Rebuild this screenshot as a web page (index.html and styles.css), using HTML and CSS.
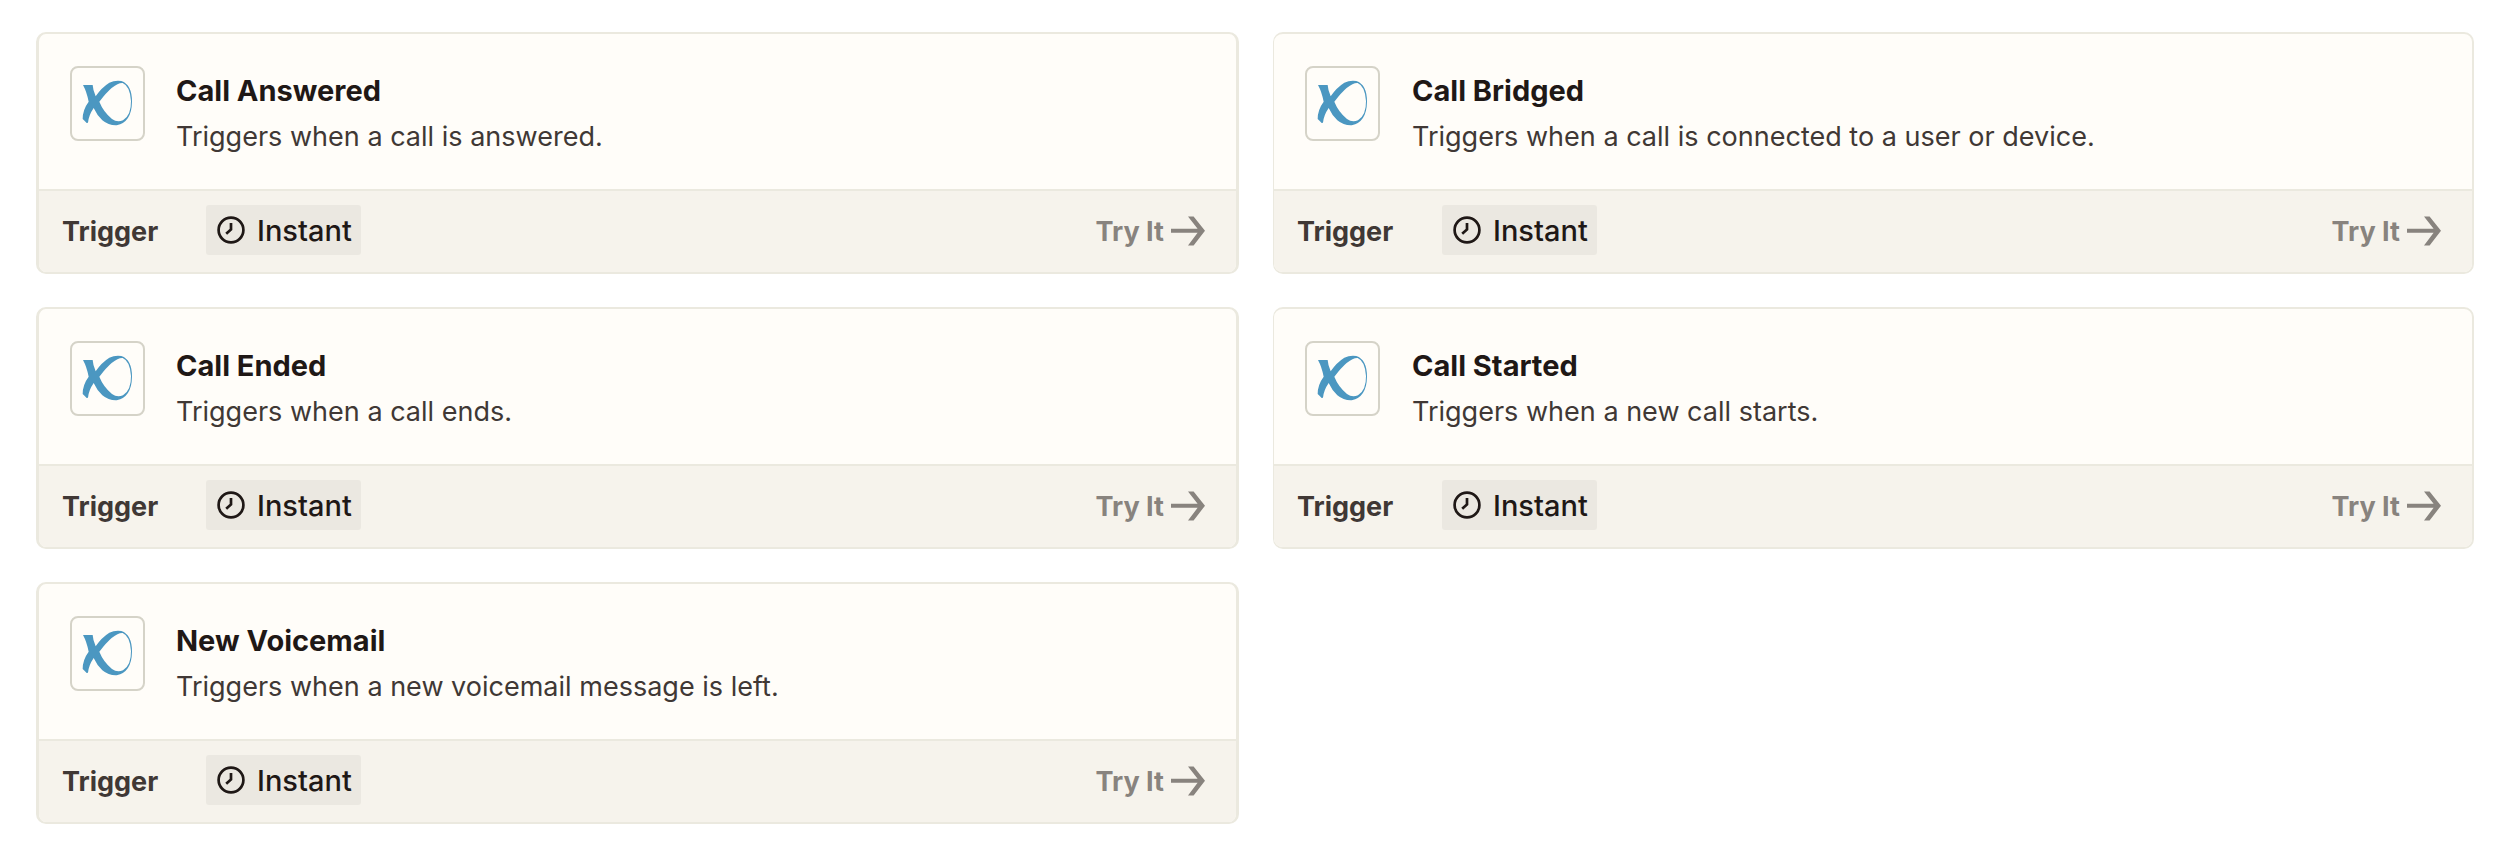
FILE: index.html
```
<!DOCTYPE html>
<html lang="en">
<head>
<meta charset="utf-8">
<title>Triggers</title>
<link rel="stylesheet" href="styles.css">
</head>
<body>
<svg class="defs" aria-hidden="true">
  <symbol id="logo" viewBox="36 36 213 213">
    <path fill="#4b97c1" fill-rule="evenodd" d="M69 87H98Q99 103 107 121Q124 95 148 80Q165 72 184 75Q216 86 216 137Q215 198 170 208Q146 209 127 193Q111 178 101 156Q86 178 84 200L80 201Q73 193 68 189Q68 161 86 137Q80 107 69 87ZM118 137Q130 167 156 189Q171 200 189 193Q214 177 213 135Q210 90 188 81Q162 79 118 137Z"/>
  </symbol>
  <symbol id="clock" viewBox="0 0 28 28">
    <g fill="none" stroke="#1f1816" stroke-width="2.7"><circle cx="14" cy="14" r="12.4"/><path d="M14 7V13.4L9.2 17.8"/></g>
  </symbol>
  <symbol id="arrow" viewBox="0 0 34 30">
    <path fill="#88837e" d="M0 12.8H26.6L17 .5H22.6L34 14.7L22.6 29.5H17L26.6 16.8H0Z"/>
  </symbol>
</svg>
<main class="grid">
  <article class="card">
    <div class="body"><div class="logo"><svg><use href="#logo"/></svg></div><div class="text"><h2>Call Answered</h2><p>Triggers when a call is answered.</p></div></div>
    <footer><span class="kind">Trigger</span><span class="badge"><svg><use href="#clock"/></svg><span>Instant</span></span><a class="try"><span>Try It</span><svg><use href="#arrow"/></svg></a></footer>
  </article>
  <article class="card right">
    <div class="body"><div class="logo"><svg><use href="#logo"/></svg></div><div class="text"><h2>Call Bridged</h2><p>Triggers when a call is connected to a user or device.</p></div></div>
    <footer><span class="kind">Trigger</span><span class="badge"><svg><use href="#clock"/></svg><span>Instant</span></span><a class="try"><span>Try It</span><svg><use href="#arrow"/></svg></a></footer>
  </article>
  <article class="card">
    <div class="body"><div class="logo"><svg><use href="#logo"/></svg></div><div class="text"><h2>Call Ended</h2><p>Triggers when a call ends.</p></div></div>
    <footer><span class="kind">Trigger</span><span class="badge"><svg><use href="#clock"/></svg><span>Instant</span></span><a class="try"><span>Try It</span><svg><use href="#arrow"/></svg></a></footer>
  </article>
  <article class="card right">
    <div class="body"><div class="logo"><svg><use href="#logo"/></svg></div><div class="text"><h2>Call Started</h2><p>Triggers when a new call starts.</p></div></div>
    <footer><span class="kind">Trigger</span><span class="badge"><svg><use href="#clock"/></svg><span>Instant</span></span><a class="try"><span>Try It</span><svg><use href="#arrow"/></svg></a></footer>
  </article>
  <article class="card">
    <div class="body"><div class="logo"><svg><use href="#logo"/></svg></div><div class="text"><h2>New Voicemail</h2><p>Triggers when a new voicemail message is left.</p></div></div>
    <footer><span class="kind">Trigger</span><span class="badge"><svg><use href="#clock"/></svg><span>Instant</span></span><a class="try"><span>Try It</span><svg><use href="#arrow"/></svg></a></footer>
  </article>
</main>
</body>
</html>
```
FILE: styles.css
```
* { box-sizing: border-box; }
body { margin: 0; background: #fff; font-family: Inter, "Liberation Sans", sans-serif; color: #1f1816; }
svg { display: block; flex: none; }
.defs { width: 0; height: 0; display: block; }
.grid { display: grid; grid-template-columns: 1203px 1201px; grid-auto-rows: 242px; gap: 33px 34px; padding: 32px 0 0 36px; }
.card { display: flex; flex-direction: column; border: 2px solid #ebe9df; border-left-width: 3px; border-right-width: 3px; border-radius: 10px; background: #fffdf9; overflow: hidden; }
.card.right { border-left-width: 1px; border-right-width: 2px; }
.body { height: 155px; display: flex; gap: 31px; padding: 32px 31px 0; }
.right .body { gap: 32px; }
.logo { width: 75px; height: 75px; flex: none; border: 2px solid #d5d3c8; border-radius: 8px; }
.logo svg { width: 71px; height: 71px; }
.text { padding-top: 2px; white-space: nowrap; }
h2 { margin: 0; font-size: 29px; line-height: 46px; font-weight: 700; }
p { margin: 0; font-size: 27px; line-height: 45px; letter-spacing: 0.01px; color: #403835; }
footer { height: 83px; display: flex; align-items: center; border-top: 2px solid #ebe9df; background: #f6f3ec; padding: 0 31px 3px 23px; font-size: 27px; white-space: nowrap; }
.kind { width: 144px; padding-top: 2px; font-weight: 700; color: #403835; }
.right .kind { width: 145px; }
.badge { display: flex; align-items: center; width: 155px; height: 50px; padding-left: 11px; gap: 12px; border-radius: 3px; background: #ebe8e1; font-size: 29px; font-weight: 500; }
.badge svg { width: 28px; height: 28px; }
.try { margin-left: auto; padding-top: 2px; display: flex; align-items: center; gap: 7px; font-weight: 700; color: #88837e; }
.try svg { width: 34px; height: 30px; }
```
